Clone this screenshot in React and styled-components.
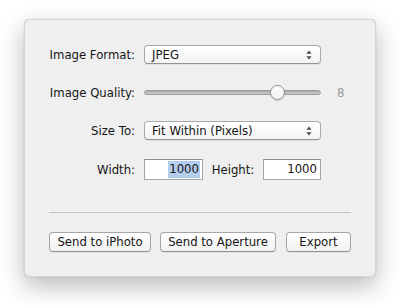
import React from 'react';
import styled, { createGlobalStyle } from 'styled-components';

const GlobalStyle = createGlobalStyle`
  html, body {
    margin: 0;
    padding: 0;
    background: #ffffff;
  }
  body {
    font-family: "DejaVu Sans", "Liberation Sans", sans-serif;
    font-size: 11.7px;
    color: #161616;
  }
`;

const Page = styled.div`
  width: 400px;
  height: 305px;
  padding: 19px 24px 0;
  box-sizing: border-box;
`;

const Panel = styled.div`
  width: 352px;
  height: 258px;
  box-sizing: border-box;
  background: #efefef;
  border-radius: 5px;
  border: 1px solid #d6d6d6;
  box-shadow: 0 9px 24px rgba(0, 0, 0, 0.28), 0 0 1px rgba(0, 0, 0, 0.25);
  padding: 25px 24px 0 24px;
`;

const Form = styled.div`
  display: grid;
  grid-template-columns: 86px 177px auto;
  grid-template-rows: 19px 19px 19px 21px;
  column-gap: 9px;
  row-gap: 19px;
  align-items: center;
`;

const Label = styled.div`
  justify-self: end;
  white-space: nowrap;
`;

const Popup = styled.div`
  height: 19px;
  box-sizing: border-box;
  display: flex;
  align-items: center;
  justify-content: space-between;
  padding: 0 8px 0 7px;
  background: linear-gradient(#ffffff, #f3f3f3);
  border: 1px solid #a9a9a9;
  border-bottom-color: #949494;
  border-radius: 4px;
  box-shadow: 0 1px 0 rgba(0, 0, 0, 0.06);
`;

const Arrows = () => (
  <svg width="6" height="10" viewBox="0 0 6 10">
    <path d="M3 0.5 L5.6 3.8 H0.4 Z" fill="#4a4a4a" />
    <path d="M3 9.5 L5.6 6.2 H0.4 Z" fill="#4a4a4a" />
  </svg>
);

const Slider = styled.div`
  position: relative;
  height: 19px;
  display: flex;
  align-items: center;
`;

const Track = styled.div`
  width: 100%;
  height: 5px;
  border-radius: 3px;
  background: linear-gradient(#a8a8a8, #cfcfcf);
  border: 1px solid #9a9a9a;
  box-sizing: border-box;
`;

const Thumb = styled.div`
  position: absolute;
  top: 2px;
  left: ${({ $at }) => $at};
  width: 15px;
  height: 15px;
  border-radius: 50%;
  box-sizing: border-box;
  background: linear-gradient(#ffffff, #f0f0f0);
  border: 1px solid #8e8e8e;
  box-shadow: 0 1px 1px rgba(0, 0, 0, 0.15);
`;

const Value = styled.div`
  color: #9b9b9b;
  margin-left: 7px;
`;

const SizeRow = styled.div`
  display: flex;
  align-items: center;
  justify-content: space-between;
`;

const Field = styled.div`
  width: ${({ $w }) => $w}px;
  height: 21px;
  box-sizing: border-box;
  background: #ffffff;
  border: 1px solid #a6a6a6;
  border-top-color: #8f8f8f;
  display: flex;
  align-items: center;
  justify-content: flex-end;
  padding: 0 2px;
`;

const Selected = styled.span`
  background: ${({ $on }) => ($on ? '#b3cdec' : 'transparent')};
  padding: 1px 1px;
  line-height: 15px;
`;

const Divider = styled.div`
  height: 1px;
  background: #c3c3c3;
  margin-top: 32px;
`;

const Buttons = styled.div`
  display: flex;
  gap: 9px;
  margin-top: 19px;
`;

const Button = styled.button`
  width: ${({ $w }) => $w}px;
  height: 20px;
  box-sizing: border-box;
  padding: 0;
  margin-left: ${({ $gap }) => $gap || 0}px;
  font-family: inherit;
  font-size: 11.7px;
  color: #161616;
  background: linear-gradient(#ffffff, #f1f1f1);
  border: 1px solid #a6a6a6;
  border-bottom-color: #909090;
  border-radius: 4px;
  box-shadow: 0 1px 0 rgba(0, 0, 0, 0.05);
`;

export default function App() {
  return (
    <>
      <GlobalStyle />
      <Page>
        <Panel>
          <Form>
            <Label>Image Format:</Label>
            <Popup>
              <span>JPEG</span>
              <Arrows />
            </Popup>
            <div />

            <Label>Image Quality:</Label>
            <Slider>
              <Track />
              <Thumb $at="126px" />
            </Slider>
            <Value>8</Value>

            <Label>Size To:</Label>
            <Popup>
              <span>Fit Within (Pixels)</span>
              <Arrows />
            </Popup>
            <div />

            <Label>Width:</Label>
            <SizeRow>
              <Field $w={59}>
                <Selected $on>1000</Selected>
              </Field>
              <span>Height:</span>
              <Field $w={58}>
                <Selected>1000</Selected>
              </Field>
            </SizeRow>
            <div />
          </Form>
          <Divider />
          <Buttons>
            <Button $w={102}>Send to iPhoto</Button>
            <Button $w={116}>Send to Aperture</Button>
            <Button $w={65} $gap={1}>Export</Button>
          </Buttons>
        </Panel>
      </Page>
    </>
  );
}
